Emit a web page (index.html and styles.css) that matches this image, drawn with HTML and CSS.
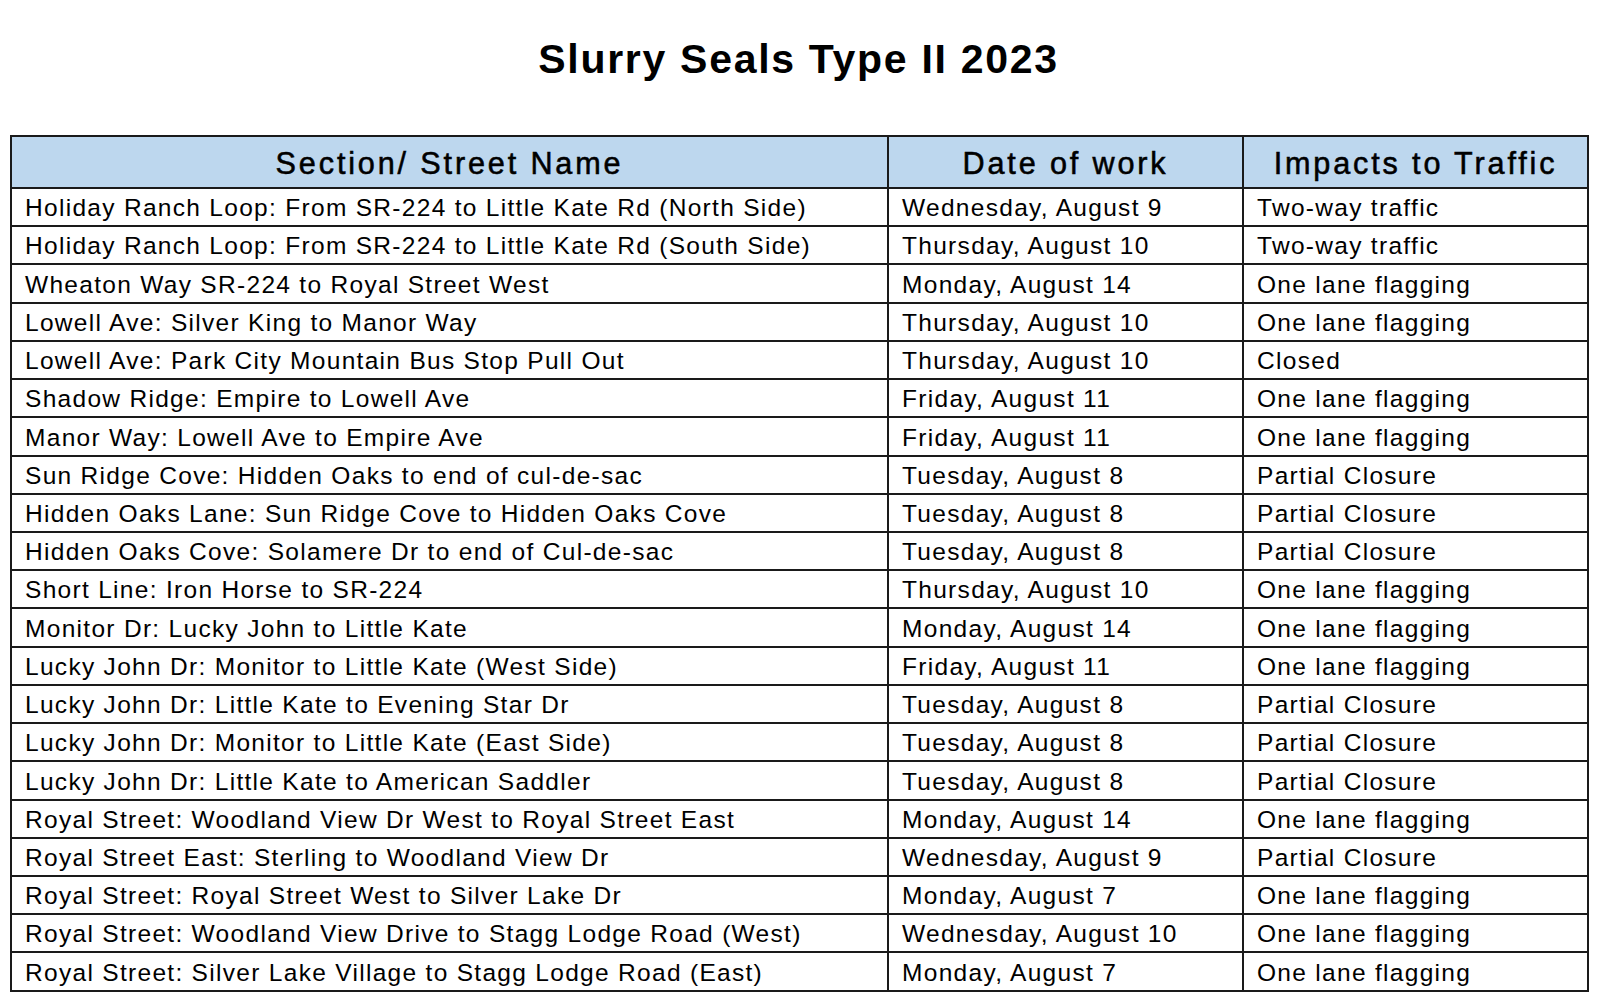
FILE: index.html
```html
<!DOCTYPE html>
<html>
<head>
<meta charset="utf-8">
<link rel="stylesheet" href="styles.css">
</head>
<body>
<h1 class="title">Slurry Seals Type II 2023</h1>
<table class="sched">
<colgroup><col class="c1"><col class="c2"><col class="c3"></colgroup>
<thead>
<tr><th>Section/ Street Name</th><th>Date of work</th><th>Impacts to Traffic</th></tr>
</thead>
<tbody>
<tr><td>Holiday Ranch Loop: From SR-224 to Little Kate Rd (North Side)</td><td>Wednesday, August 9</td><td>Two-way traffic</td></tr>
<tr><td>Holiday Ranch Loop: From SR-224 to Little Kate Rd (South Side)</td><td>Thursday, August 10</td><td>Two-way traffic</td></tr>
<tr><td>Wheaton Way SR-224 to Royal Street West</td><td>Monday, August 14</td><td>One lane flagging</td></tr>
<tr><td>Lowell Ave: Silver King to Manor Way</td><td>Thursday, August 10</td><td>One lane flagging</td></tr>
<tr><td>Lowell Ave: Park City Mountain Bus Stop Pull Out</td><td>Thursday, August 10</td><td>Closed</td></tr>
<tr><td>Shadow Ridge: Empire to Lowell Ave</td><td>Friday, August 11</td><td>One lane flagging</td></tr>
<tr><td>Manor Way: Lowell Ave to Empire Ave</td><td>Friday, August 11</td><td>One lane flagging</td></tr>
<tr><td>Sun Ridge Cove: Hidden Oaks to end of cul-de-sac</td><td>Tuesday, August 8</td><td>Partial Closure</td></tr>
<tr><td>Hidden Oaks Lane: Sun Ridge Cove to Hidden Oaks Cove</td><td>Tuesday, August 8</td><td>Partial Closure</td></tr>
<tr><td>Hidden Oaks Cove: Solamere Dr to end of Cul-de-sac</td><td>Tuesday, August 8</td><td>Partial Closure</td></tr>
<tr><td>Short Line: Iron Horse to SR-224</td><td>Thursday, August 10</td><td>One lane flagging</td></tr>
<tr><td>Monitor Dr: Lucky John to Little Kate</td><td>Monday, August 14</td><td>One lane flagging</td></tr>
<tr><td>Lucky John Dr: Monitor to Little Kate (West Side)</td><td>Friday, August 11</td><td>One lane flagging</td></tr>
<tr><td>Lucky John Dr: Little Kate to Evening Star Dr</td><td>Tuesday, August 8</td><td>Partial Closure</td></tr>
<tr><td>Lucky John Dr: Monitor to Little Kate (East Side)</td><td>Tuesday, August 8</td><td>Partial Closure</td></tr>
<tr><td>Lucky John Dr: Little Kate to American Saddler</td><td>Tuesday, August 8</td><td>Partial Closure</td></tr>
<tr><td>Royal Street: Woodland View Dr West to Royal Street East</td><td>Monday, August 14</td><td>One lane flagging</td></tr>
<tr><td>Royal Street East: Sterling to Woodland View Dr</td><td>Wednesday, August 9</td><td>Partial Closure</td></tr>
<tr><td>Royal Street: Royal Street West to Silver Lake Dr</td><td>Monday, August 7</td><td>One lane flagging</td></tr>
<tr><td>Royal Street: Woodland View Drive to Stagg Lodge Road (West)</td><td>Wednesday, August 10</td><td>One lane flagging</td></tr>
<tr><td>Royal Street: Silver Lake Village to Stagg Lodge Road (East)</td><td>Monday, August 7</td><td>One lane flagging</td></tr>
</tbody>
</table>
</body>
</html>
```
FILE: styles.css
```css
html, body { margin: 0; padding: 0; background: #fff; }
body {
  font-family: "Liberation Sans", Arial, sans-serif;
  color: #000;
}
.title {
  margin: 0 0 0 10px;
  width: 1577px;
  padding-top: 35px;
  height: 135px;
  box-sizing: border-box;
  text-align: center;
  font-size: 41px;
  font-weight: bold;
  letter-spacing: 1.7px;
  line-height: 48px;
}
.sched {
  margin-left: 10px;
  border-collapse: collapse;
  width: 1577px;
  table-layout: fixed;
  border: 2px solid #1a1a1a;
}
.c1 { width: 877px; }
.c2 { width: 355px; }
.c3 { width: 345px; }
.sched th, .sched td {
  border: 2px solid #1a1a1a;
  padding: 0 0 0 13px;
  text-align: left;
  white-space: nowrap;
  overflow: hidden;
  vertical-align: bottom;
}
.sched thead tr { height: 52px; }
.sched tbody tr { height: 38.23px; }
.sched th {
  background: #bdd7ee;
  font-size: 30.6px;
  font-weight: normal;
  letter-spacing: 2.85px;
  -webkit-text-stroke: 0.55px #000;
  text-align: center;
  padding: 0 0 6px 0;
  line-height: 36px;
}
.sched td {
  font-size: 24.5px;
  letter-spacing: 1.3px;
  line-height: 28px;
  padding-bottom: 3px;
}
```
